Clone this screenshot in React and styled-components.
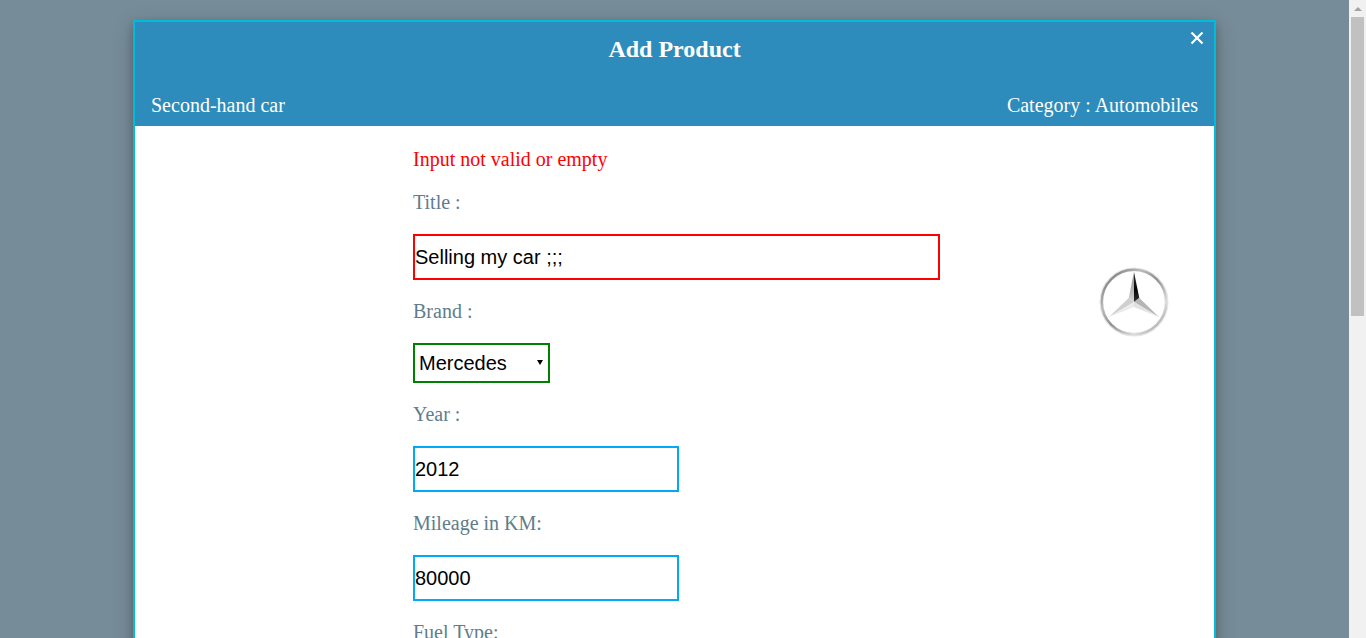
import React from 'react'
import styled, { createGlobalStyle } from 'styled-components'

const GlobalStyle = createGlobalStyle`
  html, body {
    margin: 0;
    height: 100%;
    overflow: hidden;
  }
`

const Page = styled.div`
  display: flex;
  height: 638px;
  overflow: hidden;
`

const Backdrop = styled.div`
  flex: 1;
  min-width: 0;
  background: #768c98;
  padding: 20px 133px 0;
  box-sizing: border-box;
  overflow: hidden;
`

const Scrollbar = styled.div`
  width: 17px;
  flex: none;
  background: #f1f1f1;
  display: flex;
  flex-direction: column;
  align-items: center;
`

const ScrollUp = styled.div`
  height: 17px;
  flex: none;
  display: flex;
  align-items: center;
  justify-content: center;
  &::before {
    content: '';
    border-left: 4px solid transparent;
    border-right: 4px solid transparent;
    border-bottom: 4px solid #a3a3a3;
  }
`

const ScrollThumb = styled.div`
  width: 13px;
  height: 299px;
  flex: none;
  background: #c1c1c1;
`

const Modal = styled.div`
  position: relative;
  width: 1083px;
  height: 700px;
  box-sizing: border-box;
  border: 2px solid #00bcd9;
  background: #fff;
  box-shadow: 0 4px 8px 0 rgba(0, 0, 0, 0.2), 0 6px 20px 0 rgba(0, 0, 0, 0.19);
  font-family: "Liberation Serif", "Times New Roman", serif;
`

const Header = styled.div`
  height: 104px;
  box-sizing: border-box;
  background: #2d8cbb;
  color: #fff;
  display: flex;
  flex-direction: column;
  padding: 14px 16px 9px;
`

const Title = styled.h2`
  margin: 0;
  font-size: 24px;
  font-weight: bold;
  line-height: 27px;
  text-align: center;
`

const SubRow = styled.div`
  margin-top: auto;
  display: flex;
  justify-content: space-between;
  font-size: 20px;
  line-height: 23px;
`

const Close = styled.button`
  position: absolute;
  top: 8px;
  right: 9px;
  width: 16px;
  height: 16px;
  padding: 0;
  border: 0;
  background: none;
  display: block;
`

const Body = styled.div`
  display: flex;
  padding: 22px 0 0 278px;
`

const Form = styled.form`
  width: 527px;
  flex: none;
  display: flex;
  flex-direction: column;
  align-items: flex-start;
  gap: 20px;
`

const ErrorText = styled.div`
  color: #f00;
  font-size: 20px;
  line-height: 23px;
`

const Label = styled.label`
  color: #607d8b;
  font-size: 20px;
  line-height: 23px;
`

const Input = styled.input`
  display: block;
  box-sizing: border-box;
  width: ${(p) => p.$width}px;
  height: 46px;
  padding: 0;
  border: 2px solid ${(p) => p.$border};
  border-radius: 0;
  outline: 0;
  background: #fff;
  color: #000;
  font-family: "Liberation Sans", Arial, sans-serif;
  font-size: 20px;
`

const SelectWrap = styled.div`
  position: relative;
  width: 137px;
  height: 40px;
  &::after {
    content: '';
    position: absolute;
    top: 17px;
    right: 7px;
    border-left: 3px solid transparent;
    border-right: 3px solid transparent;
    border-top: 5px solid #000;
    pointer-events: none;
  }
`

const Select = styled.select`
  display: block;
  box-sizing: border-box;
  width: 100%;
  height: 100%;
  padding: 0 0 0 4px;
  appearance: none;
  border: 2px solid #008000;
  border-radius: 0;
  outline: 0;
  background: #fff;
  color: #000;
  font-family: "Liberation Sans", Arial, sans-serif;
  font-size: 20px;
`

const LogoWrap = styled.div`
  flex: none;
  margin: 118px 0 0 158px;
  width: 72px;
  height: 72px;
`

const CloseIcon = () => (
  <svg width="16" height="16" viewBox="0 0 16 16">
    <path d="M2.5 2.5 L13.5 13.5 M13.5 2.5 L2.5 13.5" stroke="#fff" strokeWidth="2.2" fill="none" />
  </svg>
)

// three pointed star in a chrome ring
const BrandLogo = () => (
  <svg width="72" height="72" viewBox="-36 -36 72 72">
    <defs>
      <linearGradient id="ring" x1="0" y1="0" x2="1" y2="1">
        <stop offset="0" stopColor="#5f5f5f" />
        <stop offset="0.3" stopColor="#bdbdbd" />
        <stop offset="0.5" stopColor="#8e8e8e" />
        <stop offset="0.75" stopColor="#dedede" />
        <stop offset="1" stopColor="#8a8a8a" />
      </linearGradient>
      <linearGradient id="darkFacet" x1="0" y1="0" x2="0" y2="1">
        <stop offset="0" stopColor="#333" />
        <stop offset="0.6" stopColor="#050505" />
        <stop offset="1" stopColor="#333" />
      </linearGradient>
      <linearGradient id="lightFacet" x1="0" y1="0" x2="0" y2="1">
        <stop offset="0" stopColor="#8a8a8a" />
        <stop offset="1" stopColor="#d4d4d4" />
      </linearGradient>
    </defs>
    <g style={{ filter: 'blur(0.3px)' }}>
      <circle r="32.6" fill="none" stroke="#e6e6e6" strokeWidth="3.8" />
      <circle r="32.2" fill="none" stroke="url(#ring)" strokeWidth="2.4" />
      <polygon points="0,-30 -5.3,-4 0,0" fill="url(#lightFacet)" />
      <polygon points="0,-30 5.3,-4 0,0" fill="url(#darkFacet)" />
      <polygon points="0,0 5.3,-4 25,15" fill="#b5b5b5" />
      <polygon points="0,0 25,15 0,5" fill="#e2e2e2" />
      <polygon points="0,0 -5.3,-4 -25,15" fill="#cfcfcf" />
      <polygon points="0,0 -25,15 0,5" fill="#ebebeb" />
    </g>
  </svg>
)

export default function App() {
  return (
    <>
      <GlobalStyle />
      <Page>
        <Backdrop>
          <Modal>
            <Close type="button" aria-label="Close">
              <CloseIcon />
            </Close>
            <Header>
              <Title>Add Product</Title>
              <SubRow>
                <span>Second-hand car</span>
                <span>Category : Automobiles</span>
              </SubRow>
            </Header>
            <Body>
              <Form>
                <ErrorText>Input not valid or empty</ErrorText>
                <Label>Title :</Label>
                <Input $width={527} $border="#f00" defaultValue="Selling my car ;;;" />
                <Label>Brand :</Label>
                <SelectWrap>
                  <Select defaultValue="Mercedes">
                    <option>Mercedes</option>
                  </Select>
                </SelectWrap>
                <Label>Year :</Label>
                <Input $width={266} $border="#03a9f4" defaultValue="2012" />
                <Label>Mileage in KM:</Label>
                <Input $width={266} $border="#03a9f4" defaultValue="80000" />
                <Label>Fuel Type:</Label>
              </Form>
              <LogoWrap>
                <BrandLogo />
              </LogoWrap>
            </Body>
          </Modal>
        </Backdrop>
        <Scrollbar>
          <ScrollUp />
          <ScrollThumb />
        </Scrollbar>
      </Page>
    </>
  )
}
